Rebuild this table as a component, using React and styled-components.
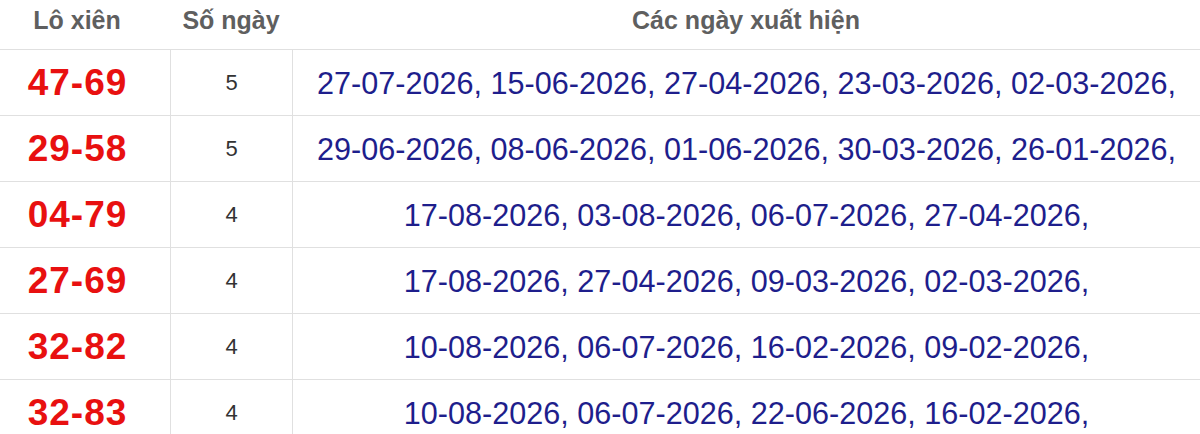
import React from "react";
import styled, { createGlobalStyle } from "styled-components";

const Global = createGlobalStyle`
  html, body { margin: 0; padding: 0; background: #fff; }
  body { font-family: "Liberation Sans", Arial, sans-serif; }
`;

const Table = styled.div`
  width: 1200px;
  display: flex;
  flex-direction: column;
`;

const Row = styled.div`
  display: grid;
  grid-template-columns: 170px 122px 1fr;
  height: ${(p) => (p.$head ? "50px" : "66px")};
  box-sizing: border-box;
  border-bottom: 1px solid #e0e0e0;
`;

const HeadCell = styled.div`
  display: flex;
  align-items: center;
  justify-content: center;
  padding-bottom: 8px;
  padding-right: ${(p) => (p.$first ? "16px" : "0")};
  font-size: 25px;
  font-weight: bold;
  color: #5f5f5f;
`;

const Cell = styled.div`
  display: flex;
  align-items: center;
  justify-content: center;
  border-left: ${(p) => (p.$first ? "none" : "1px solid #e0e0e0")};
`;

const Pair = styled(Cell)`
  padding-right: 15px;
  font-size: 37px;
  font-weight: bold;
  letter-spacing: 1px;
  color: #e81010;
`;

const Count = styled(Cell)`
  font-size: 22px;
  color: #333;
`;

const Dates = styled(Cell)`
  font-size: 30.6px;
  color: #1e1e8c;
  white-space: nowrap;
  padding-top: 2px;
`;

const rows = [
  ["47-69", 5, "27-07-2026, 15-06-2026, 27-04-2026, 23-03-2026, 02-03-2026,"],
  ["29-58", 5, "29-06-2026, 08-06-2026, 01-06-2026, 30-03-2026, 26-01-2026,"],
  ["04-79", 4, "17-08-2026, 03-08-2026, 06-07-2026, 27-04-2026,"],
  ["27-69", 4, "17-08-2026, 27-04-2026, 09-03-2026, 02-03-2026,"],
  ["32-82", 4, "10-08-2026, 06-07-2026, 16-02-2026, 09-02-2026,"],
  ["32-83", 4, "10-08-2026, 06-07-2026, 22-06-2026, 16-02-2026,"],
];

export default function App() {
  return (
    <>
      <Global />
      <Table>
        <Row $head>
          <HeadCell $first>Lô xiên</HeadCell>
          <HeadCell>Số ngày</HeadCell>
          <HeadCell>Các ngày xuất hiện</HeadCell>
        </Row>
        {rows.map(([pair, n, dates]) => (
          <Row key={pair}>
            <Pair $first>{pair}</Pair>
            <Count>{n}</Count>
            <Dates>{dates}</Dates>
          </Row>
        ))}
      </Table>
    </>
  );
}
